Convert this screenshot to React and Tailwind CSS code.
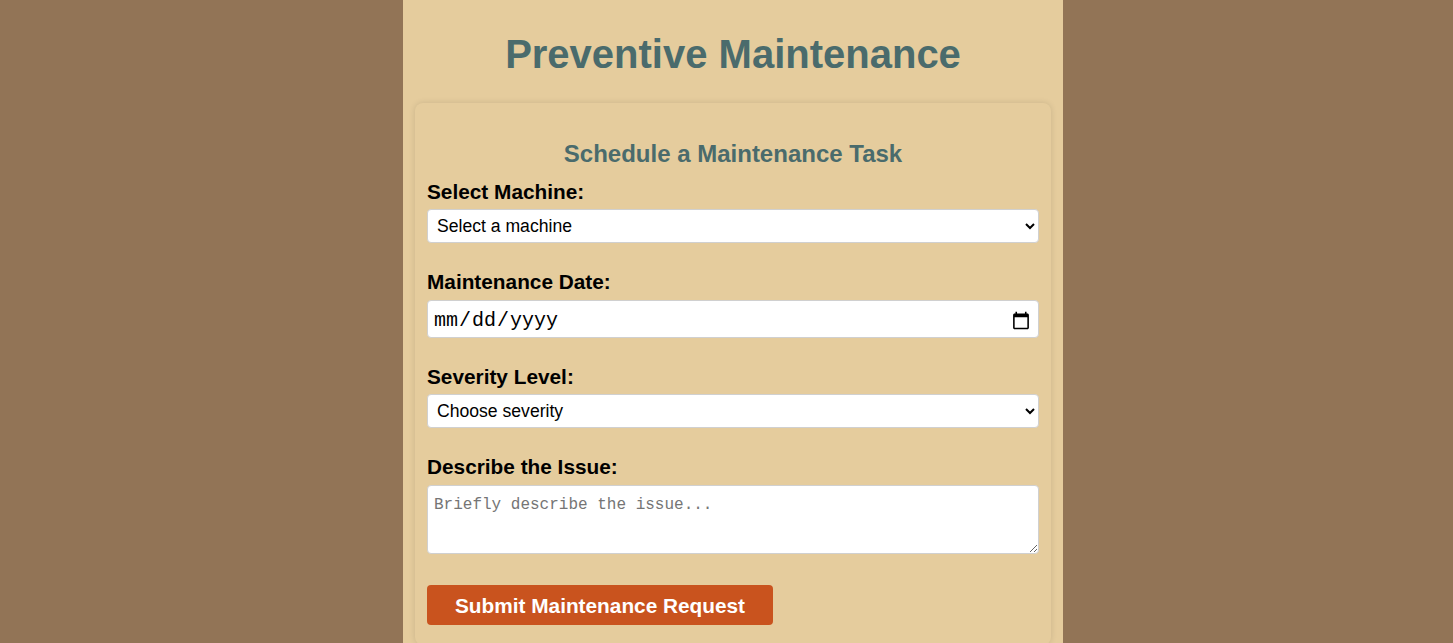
import React from "react";

export default function App() {
  return (
    <div className="min-h-screen bg-[#927456] flex justify-center pl-[13px]" style={{ fontFamily: '"Liberation Sans", Arial, sans-serif' }}>
      <div className="w-[660px] min-h-screen bg-[#e5cc9d] px-[12px] pb-[20px]">
        <h1 className="mt-[31px] mb-[26px] text-center text-[40px] leading-[46px] font-bold text-[#4a6b6c]">
          Preventive Maintenance
        </h1>
        <div className="rounded-[8px] bg-[#e5cc9d] shadow-[0_0_6px_rgba(0,0,0,0.12)] px-[12px] pt-[37px] pb-[20px]">
          <h2 className="text-center text-[24px] leading-[27.6px] font-bold text-[#4a6b6c] mb-[12px]">
            Schedule a Maintenance Task
          </h2>
          <form className="flex flex-col" onSubmit={(e) => e.preventDefault()}>
            <label className="block text-[20.8px] leading-[24px] font-bold text-black mb-[5.5px]">Select Machine:</label>
            <select className="block w-full h-[34px] border border-[#d0d0d0] rounded-[4px] bg-white text-black text-[17.6px] pl-[5px] pr-[6px] mb-[26.5px]" defaultValue="">
              <option value="">Select a machine</option>
              <option>Lathe 1</option>
              <option>CNC Mill</option>
            </select>

            <label className="block text-[20.8px] leading-[24px] font-bold text-black mb-[6.5px]">Maintenance Date:</label>
            <input
              type="date"
              className="block w-full h-[38px] border border-[#d0d0d0] rounded-[4px] bg-white text-black text-[20px] px-[5px] pt-[3px] mb-[26.5px]"
              style={{ fontFamily: '"Liberation Mono", "DejaVu Sans Mono", monospace' }}
            />

            <label className="block text-[20.8px] leading-[24px] font-bold text-black mb-[5.5px]">Severity Level:</label>
            <select className="block w-full h-[34px] border border-[#d0d0d0] rounded-[4px] bg-white text-black text-[17.6px] pl-[5px] pr-[6px] mb-[26.5px]" defaultValue="">
              <option value="">Choose severity</option>
              <option>Low</option>
              <option>Medium</option>
              <option>High</option>
            </select>

            <label className="block text-[20.8px] leading-[24px] font-bold text-black mb-[6.5px]">Describe the Issue:</label>
            <textarea
              placeholder="Briefly describe the issue..."
              className="block w-full h-[69px] border border-[#d0d0d0] rounded-[4px] bg-white text-black text-[16px] leading-[19px] px-[6px] pt-[10px] mb-[31px] placeholder:text-[#757575]"
              style={{ fontFamily: '"Liberation Mono", "DejaVu Sans Mono", monospace' }}
            />

            <div>
              <button type="submit" className="h-[40px] px-[28px] rounded-[4px] bg-[#c9531e] text-white text-[20.8px] font-bold">
                Submit Maintenance Request
              </button>
            </div>
          </form>
        </div>
      </div>
    </div>
  );
}
